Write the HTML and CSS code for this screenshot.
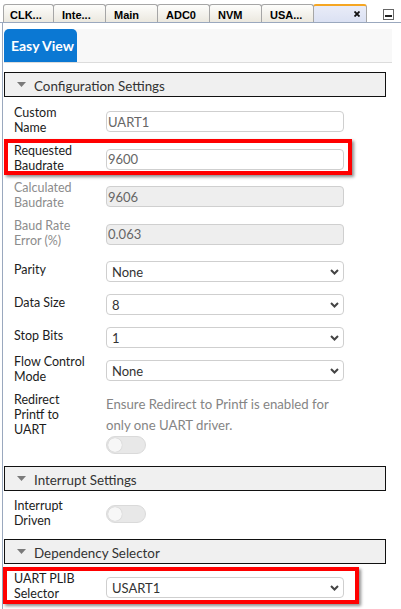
FILE: index.html
```html
<!DOCTYPE html>
<html>
<head>
<meta charset="utf-8">
<link rel="stylesheet" href="styles.css">
</head>
<body>
<div class="tabstrip">
  <div class="tab first">CLK...</div>
  <div class="tab">Inte...</div>
  <div class="tab">Main</div>
  <div class="tab">ADC0</div>
  <div class="tab">NVM</div>
  <div class="tab">USA...</div>
  <div class="tab active">
    <svg class="close" width="6" height="6" viewBox="0 0 6 6"><path d="M0.5 0.5 L5.5 5.5 M5.5 0.5 L0.5 5.5" stroke="#111" stroke-width="1.8"/></svg>
  </div>
  <div class="spacer"></div>
  <svg class="minimize" width="11" height="11" viewBox="0 0 11 11"><rect x="0.5" y="0.5" width="10" height="10" fill="#fff" stroke="#666"/><rect x="2" y="6" width="7" height="2" fill="#222"/></svg>
</div>
<div class="main">
  <div class="viewbar"><div class="viewtab">Easy View</div></div>
  <div class="form">
    <div class="section"><svg class="tri" width="9" height="5" viewBox="0 0 9 5"><path d="M0 0 H9 L4.5 5 Z" fill="#7a7a7a"/></svg><span>Configuration Settings</span></div>

    <div class="row r-first">
      <div class="label">Custom<br>Name</div>
      <div class="input">UART1</div>
    </div>
    <div class="row mark mark1">
      <div class="label">Requested<br>Baudrate</div>
      <div class="input">9600</div>
    </div>
    <div class="row">
      <div class="label dis">Calculated<br>Baudrate</div>
      <div class="input disabled">9606</div>
    </div>
    <div class="row">
      <div class="label dis">Baud Rate<br>Error (%)</div>
      <div class="input disabled">0.063</div>
    </div>
    <div class="row">
      <div class="label one">Parity</div>
      <div class="select"><span>None</span><svg class="chev" width="9" height="6" viewBox="0 0 9 6"><path d="M1 1 L4.5 4.5 L8 1" fill="none" stroke="#444" stroke-width="2"/></svg></div>
    </div>
    <div class="row tight">
      <div class="label one">Data Size</div>
      <div class="select"><span>8</span><svg class="chev" width="9" height="6" viewBox="0 0 9 6"><path d="M1 1 L4.5 4.5 L8 1" fill="none" stroke="#444" stroke-width="2"/></svg></div>
    </div>
    <div class="row tight">
      <div class="label one">Stop Bits</div>
      <div class="select"><span>1</span><svg class="chev" width="9" height="6" viewBox="0 0 9 6"><path d="M1 1 L4.5 4.5 L8 1" fill="none" stroke="#444" stroke-width="2"/></svg></div>
    </div>
    <div class="row tight">
      <div class="label">Flow Control<br>Mode</div>
      <div class="select"><span>None</span><svg class="chev" width="9" height="6" viewBox="0 0 9 6"><path d="M1 1 L4.5 4.5 L8 1" fill="none" stroke="#444" stroke-width="2"/></svg></div>
    </div>
    <div class="row free">
      <div class="label">Redirect<br>Printf to<br>UART</div>
      <div class="ctl">
        <div class="desc">Ensure Redirect to Printf is enabled for<br>only one UART driver.</div>
        <div class="toggle"></div>
      </div>
    </div>

    <div class="section sec2"><svg class="tri" width="9" height="5" viewBox="0 0 9 5"><path d="M0 0 H9 L4.5 5 Z" fill="#7a7a7a"/></svg><span>Interrupt Settings</span></div>
    <div class="row r-first toggle-row">
      <div class="label">Interrupt<br>Driven</div>
      <div class="ctl"><div class="toggle"></div></div>
    </div>

    <div class="section sec3"><svg class="tri" width="9" height="5" viewBox="0 0 9 5"><path d="M0 0 H9 L4.5 5 Z" fill="#7a7a7a"/></svg><span>Dependency Selector</span></div>
    <div class="row r-last mark mark2">
      <div class="label">UART PLIB<br>Selector</div>
      <div class="select"><span>USART1</span><svg class="chev" width="9" height="6" viewBox="0 0 9 6"><path d="M1 1 L4.5 4.5 L8 1" fill="none" stroke="#444" stroke-width="2"/></svg></div>
    </div>
  </div>
</div>
</body>
</html>
```

FILE: styles.css
```css
html, body {
  margin: 0;
  padding: 0;
  background: #fff;
}
body {
  width: 401px;
  height: 609px;
  overflow: hidden;
  font-family: Lato, "Open Sans", sans-serif;
  font-size: 13px;
  color: #222;
}

/* ---------- top tab strip ---------- */
.tabstrip {
  display: flex;
  align-items: flex-end;
  height: 22px;
  border-bottom: 1px solid #9aa8be;
  padding-left: 3px;
}
.tab {
  box-sizing: border-box;
  width: 53px;
  height: 18px;
  margin-left: -1px;
  padding: 3px 0 0 8px;
  border: 1px solid #a6a6a6;
  border-bottom: none;
  border-radius: 3px 3px 0 0;
  background: linear-gradient(#fdfdfb, #ebe8df);
  font-family: "Liberation Sans", Arial, sans-serif;
  font-weight: 700;
  font-size: 11px;
  line-height: 14px;
  color: #000;
  white-space: nowrap;
}
.tab.first {
  width: 51px;
  margin-left: 0;
  padding-left: 6px;
}
.tab.active {
  width: 54px;
  border-top: 2px solid #f5a623;
  background: linear-gradient(#e9ecf8, #dbe1f3);
  display: flex;
  justify-content: flex-end;
  align-items: center;
  padding: 0 6px 1px 0;
}
.close {
  display: block;
}
.spacer {
  flex: 1;
}
.minimize {
  display: block;
  margin: 0 7px 2px 0;
}

/* ---------- main panel ---------- */
.main {
  margin-left: 2px;
  border-left: 1px solid #9aa8be;
  height: 586px;
  padding: 6px 0 0 1px;
  box-sizing: border-box;
}
.viewbar {
  height: 33px;
  margin-right: 9px;
  background: #f8f8f8;
  border-bottom: 1px solid #dcdcdc;
  display: flex;
}
.viewtab {
  box-sizing: border-box;
  width: 73px;
  padding-left: 7px;
  display: flex;
  align-items: center;
  background: #0b78d3;
  border-radius: 5px 5px 0 0;
  color: #fff;
  font-family: Lato, "Open Sans", sans-serif;
  font-weight: 700;
  font-size: 14px;
  white-space: nowrap;
}

.form {
  margin-right: 15px;
  padding-top: 9px;
}

.section {
  box-sizing: border-box;
  height: 25px;
  border: 1px solid #111;
  background: #f0f0f0;
  display: flex;
  align-items: center;
  padding: 2px 0 0 12px;
  font-size: 13.4px;
  color: #333;
}
.section .tri {
  display: block;
  margin: -2px 8px 0 0;
}
.sec2 { margin-top: 12px; }
.sec3 { margin-top: 16px; }

/* ---------- rows ---------- */
.row {
  position: relative;
  display: flex;
  align-items: center;
  height: 21px;
  padding-left: 10px;
  margin-top: 16.5px;
}
.row.r-first { margin-top: 14px; }
.row.tight { margin-top: 12px; }
.row.r-last { margin-top: 13px; }
.row.free {
  height: auto;
  align-items: flex-start;
  margin-top: 12px;
}
.row.toggle-row { height: 18px; }

.label {
  flex: none;
  width: 92px;
  font-size: 12.5px;
  line-height: 15px;
  margin-bottom: 3px;
  color: #1c1c1c;
  white-space: nowrap;
}
.label.one { margin-bottom: 5px; }
.row.free .label { margin-bottom: 0; margin-top: -1px; }
.label.dis { color: #8c8c8c; }

.input, .select {
  flex: none;
  width: 238px;
  box-sizing: border-box;
  height: 21px;
  border: 1px solid #cfcfcf;
  border-radius: 4px;
  background: #fff;
  display: flex;
  align-items: center;
  font-size: 13px;
  white-space: nowrap;
}
.input {
  padding-left: 1px;
  color: #666;
}
.input.disabled {
  background: #eeeeee;
}
.select {
  justify-content: space-between;
  padding: 1px 4px 0 5px;
  color: #333;
}
.chev { display: block; }

.ctl {
  flex: none;
  width: 238px;
  padding-top: 1px;
}
.desc {
  font-size: 13.2px;
  line-height: 21px;
  color: #858585;
  white-space: nowrap;
}
.toggle {
  position: relative;
  box-sizing: border-box;
  width: 40px;
  height: 18px;
  border-radius: 9px;
  background: #e8e8e8;
  border: 1px solid #dadada;
}
.toggle-row .ctl {
  padding-top: 0;
}
.toggle::after {
  content: "";
  position: absolute;
  left: 1px;
  top: 1px;
  width: 14px;
  height: 14px;
  border-radius: 50%;
  background: #f7f7f7;
  box-shadow: 0 0 1px rgba(0,0,0,.25);
}

/* ---------- red highlight annotations ---------- */
.mark::before {
  content: "";
  position: absolute;
  border: 4px solid #ff0000;
  box-shadow: 2px 2px 3px rgba(0,0,0,.45);
  pointer-events: none;
}
.mark1::before {
  top: -9.5px;
  bottom: -5.5px;
  left: 0;
  right: 34px;
}
.mark2::before {
  top: -10px;
  bottom: -5.5px;
  left: -1px;
  right: 27px;
}
```
